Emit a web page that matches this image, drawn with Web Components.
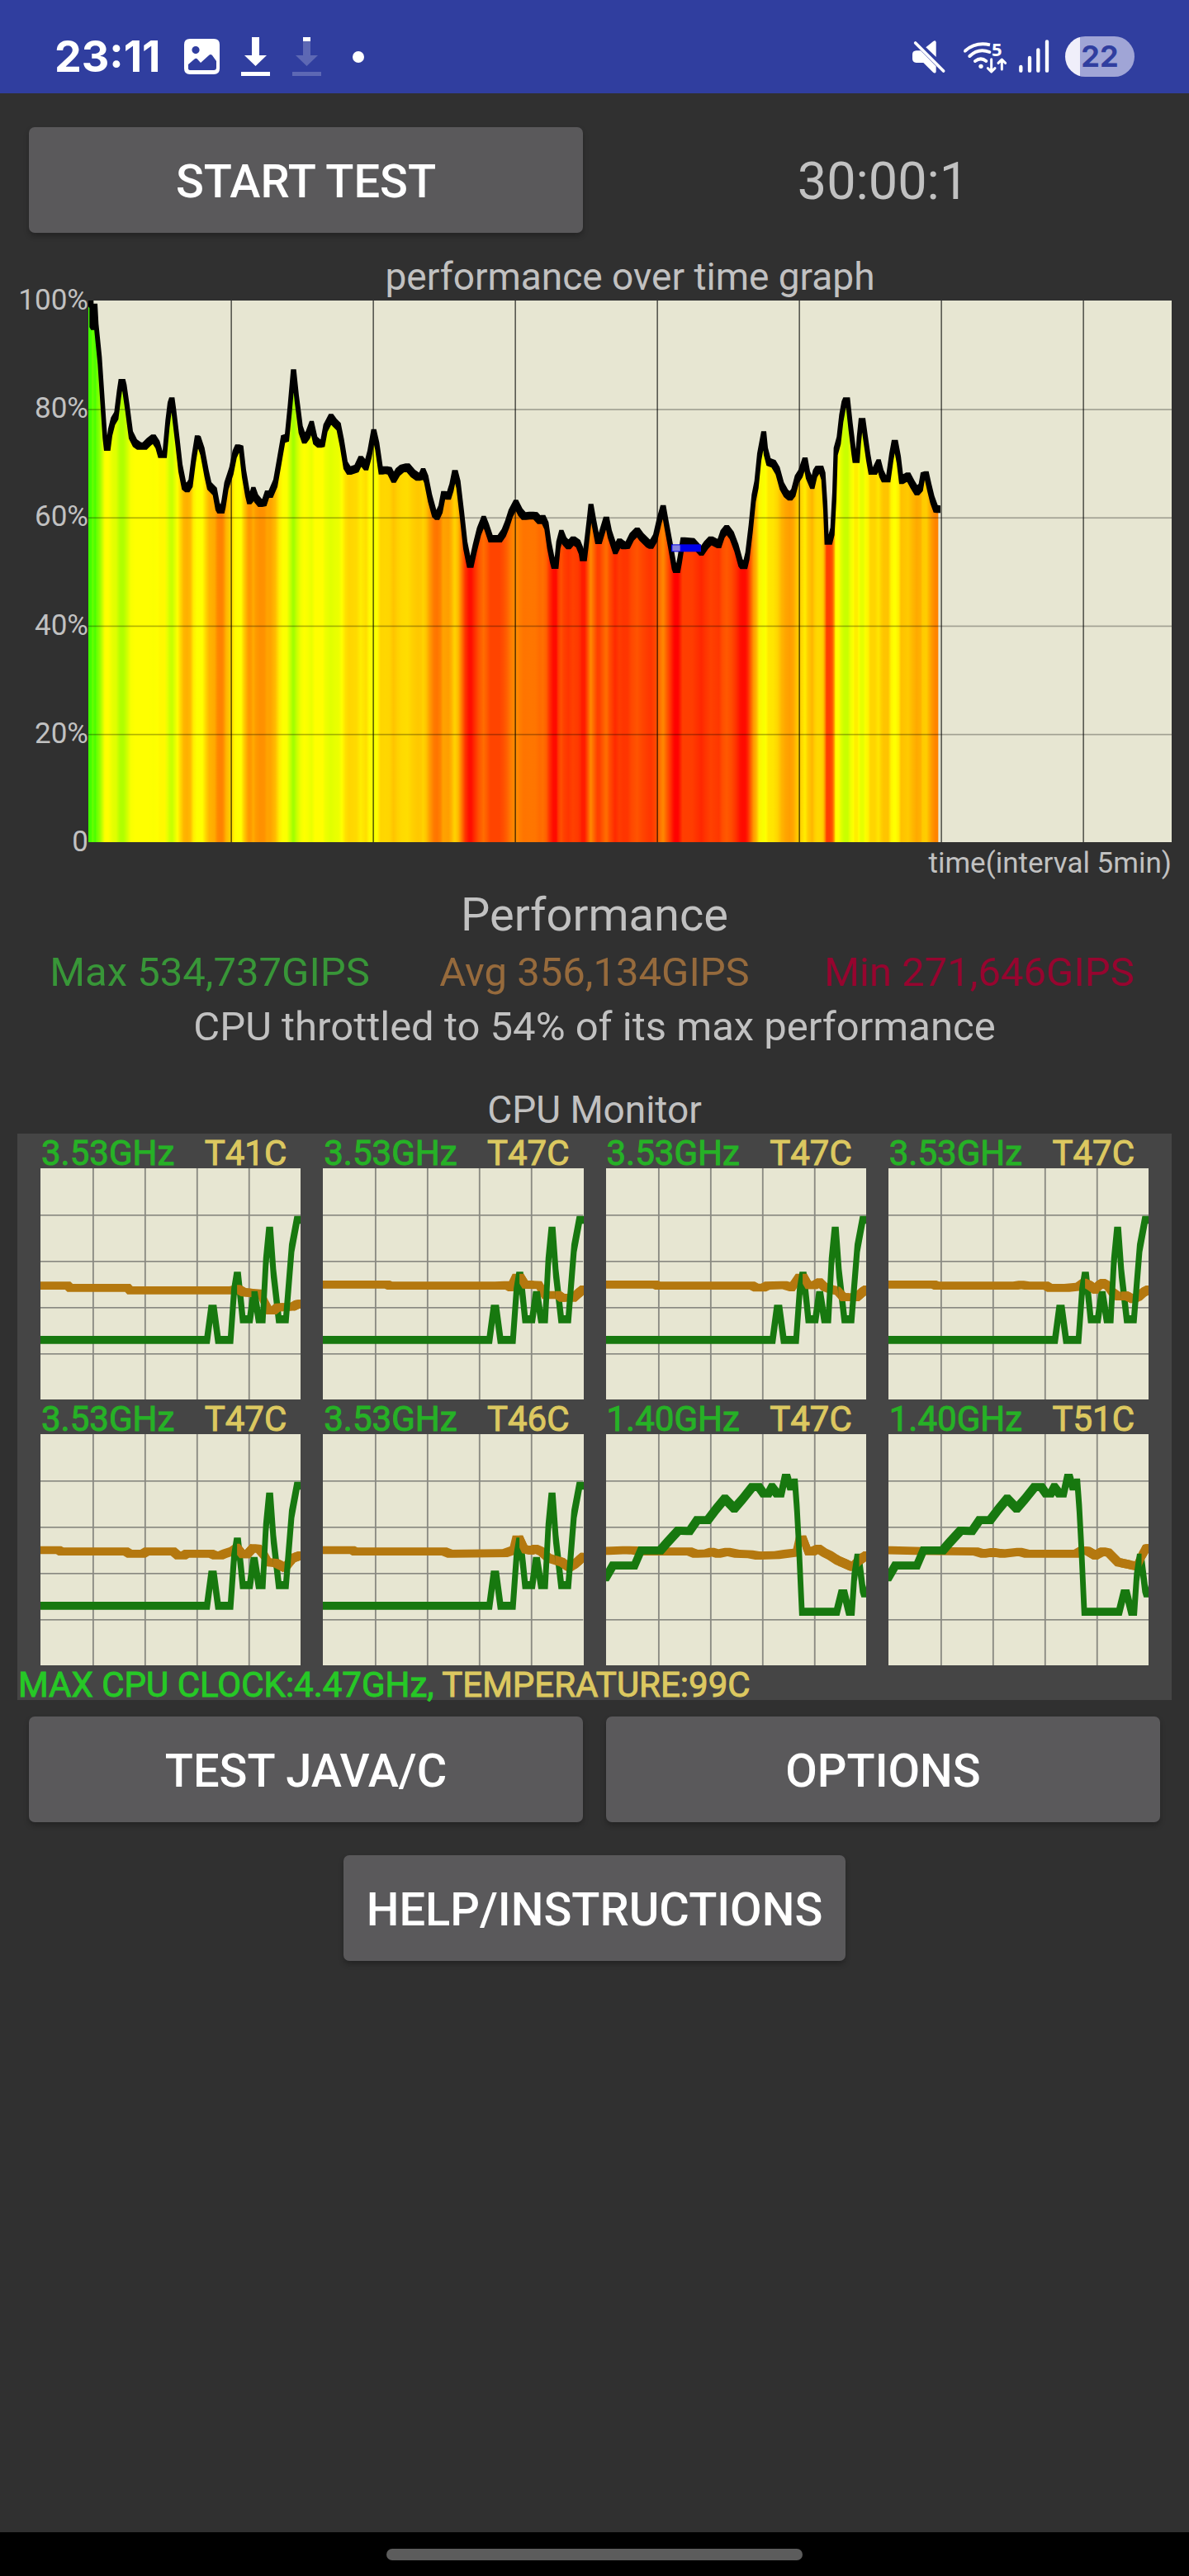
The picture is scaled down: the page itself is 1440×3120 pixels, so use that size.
<!DOCTYPE html>
<html lang="en">
<head>
<meta charset="utf-8">
<meta name="viewport" content="width=device-width, initial-scale=1">
<title>CPU Throttling Test</title>
<style>
  body { margin: 0; background: #303030; color: #c1c1c1; font-family: Roboto, "Liberation Sans", sans-serif; }
</style>
</head>
<body>
<throttle-app></throttle-app>

<script>
const define = (name, html, setup) => {
  const template = document.createElement('template');
  template.innerHTML = html;
  customElements.define(name, class extends HTMLElement {
    connectedCallback() {
      if (this.shadowRoot) return;
      this.attachShadow({ mode: 'open' }).append(template.content.cloneNode(true));
      if (setup) setup(this, this.shadowRoot);
    }
  });
};

/* Sweeps a rectangular nib along the points: one hull per segment, all in one path. */
const sweep = (pts, nibW, nibH) => {
  const w = nibW / 2, h = nibH / 2;
  let d = '';
  for (let i = 1; i < pts.length; i++) {
    const [x1, y1] = pts[i - 1], [x2, y2] = pts[i];
    const hull = y2 >= y1
      ? [[x1 - w, y1 - h], [x1 + w, y1 - h], [x2 + w, y2 - h], [x2 + w, y2 + h], [x2 - w, y2 + h], [x1 - w, y1 + h]]
      : [[x1 - w, y1 - h], [x2 - w, y2 - h], [x2 + w, y2 - h], [x2 + w, y2 + h], [x1 + w, y1 + h], [x1 - w, y1 + h]];
    d += 'M' + hull.map(p => p.map(n => Math.round(n)).join(' ')).join('L') + 'Z';
  }
  return d;
};

/* ---------- status bar ---------- */
define('status-bar', `
<style>
  :host { display: flex; align-items: center; justify-content: space-between; box-sizing: border-box;
    height: 113px; padding: 24px 66px 0 66px; background: #303e9f; color: #fff; }
  div { display: flex; align-items: center; }
  time { font: 700 52px/60px Inter, sans-serif; margin-right: 28px; }
  svg { display: block; flex: none; }
  .left svg { margin-right: 25px; }
  .dot { width: 14px; height: 14px; border-radius: 50%; background: #fff; margin-left: 12px; }
  .mute { margin-right: 20px; }
  .wifi { margin-right: 13px; }
  .signal { margin-right: 18px; }
  .battery { width: 84px; height: 49px; border-radius: 25px; justify-content: center;
    background: linear-gradient(90deg, #f0effa 18px, #a0a5d6 18px); color: #303e9f;
    font: 700 36px/49px Inter, sans-serif; }
</style>
<div class="left">
  <time>23:11</time>
  <svg width="43" height="43" viewBox="0 0 43 43" aria-hidden="true">
    <path fill="#fff" fill-rule="evenodd" d="M7 0H36Q43 0 43 7V36Q43 43 36 43H7Q0 43 0 36V7Q0 0 7 0ZM14 9A4.600 4.600 0 1 0 14 18.200A4.600 4.600 0 1 0 14 9ZM5 31V36Q5 38 8 38H36Q39 38 39 35V27L34 20Q32 18 30 20L20 29L15.500 24Q14 23 12 25Z"/>
  </svg>
  <svg width="37" height="47" viewBox="0 0 37 47" aria-hidden="true">
    <path fill="#fff" d="M14 0H23V22H32L18.500 35L5 22H14ZM1 42H36V47H1Z"/>
  </svg>
  <svg width="37" height="47" viewBox="0 0 37 47" aria-hidden="true">
    <path fill="#fff" fill-opacity=".22" d="M14 0H23V22H32L18.500 35L5 22H14ZM1 42H36V47H1Z"/>
    <path fill="#fff" d="M14 0H23V5H14Z"/>
  </svg>
  <span class="dot"></span>
</div>
<div>
  <svg class="mute" width="42" height="43" viewBox="45 50 126 129" aria-hidden="true">
    <path fill="#fff" d="M62 93H78L134 150V170Q131 179 122 171L88 137H62Q48 136 48 122V107Q48 94 62 93Z"/>
    <path fill="#fff" d="M97 81L124 59Q133 53 134 63V116Z"/>
    <path stroke="#fff" stroke-width="11" stroke-linecap="round" d="M59 65L161 167"/>
  </svg>
  <svg class="wifi" width="54" height="63" viewBox="229 22 162 189" aria-hidden="true">
    <g fill="none" stroke="#fff" stroke-width="12" stroke-linecap="round">
      <path d="M237 96Q276 62 328 74" stroke-linecap="butt"/>
      <path d="M254 115Q286 84 326 100"/>
      <path d="M274 133Q295 117 314 133"/>
      <path stroke-width="9" stroke-linejoin="round" d="M333 126V170M320 159L333 172L346 159M371 163V129M358 140L371 127L384 140"/>
    </g>
    <circle cx="237" cy="97" r="5" fill="#fff"/>
    <circle cx="295" cy="152" r="8" fill="#fff"/>
    <text x="353" y="114" font-size="66" font-weight="700" font-family="Open Sans, sans-serif" text-anchor="middle" fill="#fff">5</text>
  </svg>
  <svg class="signal" width="39" height="43" viewBox="425 52 117 129" aria-hidden="true">
    <path stroke="#fff" stroke-width="13" stroke-linecap="round" d="M435 154V168M467 121V168M498 92V168M530 62V168"/>
  </svg>
  <div class="battery">22</div>
</div>`);

/* ---------- push button ---------- */
define('push-button', `
<style>
  :host { display: block; }
  button { display: block; box-sizing: border-box; width: 100%; height: 128px; padding: 4px 28px 0; border: 0; border-radius: 7px;
    background: #5a595b; color: #fff; font: 500 56px/66px Roboto, sans-serif; white-space: nowrap;
    box-shadow: 0 4px 6px rgba(0,0,0,.25); }
</style>
<button type="button"><slot></slot></button>`);

/* ---------- performance plot ---------- */
/* Samples in thirds of a pixel; every batch has its own origin and time scale. */
const BATCHES = [
  { x0: -321, y0: -72, k: 1, points: '325,75 332,86 332,155 338,165 346,96 350,170 362,290 372,440 380,560 385,604 393,604 400,550 410,510 422,490 432,410 438,370 447,370 452,390 462,460 475,560 490,590 505,600 525,600 540,585 557,572 572,595 582,630 598,630 608,520 616,455 622,437 626,437 632,480 645,590 655,680 668,745 680,755 692,735 703,650 715,575 721,578 735,620 750,700 760,745 780,765 790,820 797,832 807,832 812,810 822,745 840,690 852,630 862,608 876,612 886,700 898,770 905,798 912,790 920,762 930,790 945,808 960,805 970,775 983,775 1000,735 1015,650 1028,575 1042,570 1052,470 1064,335 1068,335 1078,430 1092,540 1105,578 1118,560 1132,522 1145,580 1160,593 1172,590 1182,535 1202,497 1215,515 1230,530 1242,590 1255,670 1268,691 1295,682 1310,650 1330,675 1342,630 1356,552 1359,552 1370,600 1383,690 1400,687 1415,690 1430,720 1445,695' },
  { x0: 1119, y0: -72, k: 1, points: '20,682 40,677 60,700 78,713 90,710 97,694 108,720 122,790 137,845 148,855 160,830 170,777 190,782 200,750 210,701 215,701 225,740 238,850 250,960 264,1029 272,1029 285,970 300,910 317,867 328,895 342,937 375,937 390,915 402,885 415,845 434,809 450,840 463,855 490,852 505,854 520,870 533,864 545,890 555,960 565,1010 571,1033 581,1033 588,960 599,918 610,945 625,962 642,942 660,955 670,980 674,1005 684,1005 692,940 700,870 705,824 708,824 718,880 730,943 738,943 745,920 760,870 765,870 775,920 795,980 810,950 825,962 840,960 855,930 875,910 890,930 915,955 925,960 940,935 955,870 967,828 971,828 982,890 995,960 1008,1035 1013,1048 1023,1048 1030,1010 1040,945 1075,948 1090,965 1108,985 1125,960 1142,942 1172,958 1185,920 1200,901 1218,925 1235,970 1250,1025 1257,1034 1267,1034 1275,1000 1287,900 1298,790 1308,740 1318,640 1333,560 1336,560 1342,620 1352,658 1370,665 1385,690 1400,745 1415,772 1430,785 1442,770 1455,720' },
  { x0: 2319, y0: 108, k: 1.0714, points: '250,520 264,475 267,475 275,525 290,563 300,520 308,506 320,505 328,530 334,640 339,765 350,765 358,730 365,600 370,440 380,400 388,320 397,270 402,257 411,257 420,350 430,440 434,468 443,468 448,400 455,332 463,332 470,390 480,460 488,511 502,511 515,482 525,520 533,539 548,539 558,460 567,411 573,411 583,470 592,545 615,530 630,560 645,586 658,570 665,530 678,525 687,570 697,615 708,648 718,650' }
];
const PLOT = { width: 3936, height: 1968 };

const heat = level => {
  const g = Math.max(0, Math.min(255, (level - 50) * 11.600));
  const r = Math.max(60, Math.min(255, 255 - (level - 74) * 7.400));
  return `rgb(${Math.round(r)},${Math.round(g)},0)`;
};

define('performance-plot', `
<style>
  :host { display: grid; grid-template-columns: 86px minmax(0, 1fr); }
  h2, p { margin: 0; font-weight: 400; grid-column: 2; }
  h2 { font-size: 46px; line-height: 58px; text-align: center; }
  .axis { display: flex; flex-direction: column; justify-content: space-between; text-align: right;
    font-size: 35px; line-height: 42px; margin: -21px 0 -21px -21px; }
  svg { display: block; width: 100%; height: 656px; background: #e7e6d2; }
  p { font-size: 35px; line-height: 42px; text-align: right; margin-top: 5px; }
</style>
<h2>performance over time graph</h2>
<div class="axis"><span>100%</span><span>80%</span><span>60%</span><span>40%</span><span>20%</span><span>0</span></div>
<svg preserveAspectRatio="none" role="img" aria-label="Performance over time"></svg>
<p>time(interval 5min)</p>`, (host, root) => {
  const { width, height } = PLOT;
  const pts = BATCHES.flatMap(b => b.points.split(' ').map(p => {
    const [x, y] = p.split(',').map(Number);
    return [Math.round(x * b.k + b.x0), y + b.y0];
  }));
  const last = pts[pts.length - 1][0];
  const stops = pts.map(([x, y]) =>
    `<stop offset="${(x / last).toFixed(4)}" stop-color="${heat(100 - (y + 4) * 100 / height)}"/>`).join('');
  let grid = '';
  for (let i = 1; i < 8; i++) grid += `<rect x="${i * 516 + 1}" y="0" width="5" height="${height}" fill-opacity=".6"/>`;
  for (let i = 1; i < 5; i++) grid += `<rect x="0" y="${i * height / 5}" width="${width}" height="5" fill-opacity=".3"/>`;
  const svg = root.querySelector('svg');
  svg.setAttribute('viewBox', `0 0 ${width} ${height}`);
  svg.innerHTML = `
    <linearGradient id="heat">${stops}</linearGradient>
    <polygon fill="url(#heat)" points="0,${height} 0,${pts[0][1]} ${pts.map(p => p.join()).join(' ')} ${last},${height}"/>
    <path d="${sweep(pts, 15, 27)}"/>
    <rect x="2118" y="886" width="108" height="27" fill="#0000e8"/>
    <rect x="2122" y="889" width="28" height="21" fill="#8583e0"/>
    ${grid}`;
});

/* ---------- one core ---------- */
const BIG_CLOCK = '0,623 439,623 450,510 457,510 468,623 501,623 510,450 517,390 521,390 528,480 533,548 552,548 561,460 565,460 575,548 586,548 594,340 602,226 606,226 614,380 628,548 647,548 662,290 676,187 686,187';
const PRIME_CLOCK = '0,520 18,477 75,477 92,422 143,422 160,395 190,350 220,352 240,312 268,312 290,272 313,234 338,270 360,235 385,192 403,192 415,215 428,215 437,192 450,215 462,215 471,158 478,158 485,190 498,175 503,270 508,400 516,645 608,645 620,578 628,578 640,645 648,645 654,520 662,448 666,448 676,560 680,578 686,578';
const HEATS = [
  '0,426 72,426 78,434 230,434 236,443 505,443 520,438 535,450 580,455 592,490 602,516 615,516 625,505 645,504 665,502 676,494 686,492',
  '0,422 170,422 176,426 460,426 485,424 495,432 507,397 522,397 533,422 570,424 585,460 620,460 630,470 660,470 672,455 686,440',
  '0,422 130,422 136,426 385,426 395,433 415,433 425,426 470,424 490,432 507,397 522,397 533,424 550,424 563,414 575,430 595,440 610,445 625,468 660,468 675,450 686,440',
  '0,422 120,422 126,426 335,426 350,423 365,426 415,426 425,434 470,434 500,430 515,415 530,425 545,440 555,425 565,416 577,425 590,450 605,465 625,462 645,475 660,465 672,450 686,440',
  '0,421 48,421 54,426 225,426 235,434 270,434 280,426 350,426 362,440 378,440 385,434 450,434 460,440 475,440 485,434 505,425 518,412 532,436 545,436 560,414 575,416 590,440 600,465 620,468 645,485 665,450 686,440',
  '0,421 78,421 84,426 320,426 335,434 480,432 500,422 507,382 520,382 532,418 550,422 560,416 575,425 595,450 630,465 650,484 665,470 686,445',
  '0,424 50,421 75,422 90,426 220,426 235,434 265,433 278,427 295,434 320,427 345,434 380,436 400,441 450,439 475,434 500,430 508,382 520,382 532,425 545,425 560,416 575,430 590,440 610,458 650,482 665,460 686,440',
  '0,421 80,424 230,426 250,434 275,428 300,434 345,427 365,434 495,434 510,422 525,424 545,440 565,426 580,430 605,465 640,475 655,480 668,440 678,416 686,414'
];

define('cpu-core', `
<style>
  :host { display: block; }
  div { display: flex; justify-content: space-between; height: 42px; line-height: 47px; padding: 0 17px 0 1px; font-size: 42px; -webkit-text-stroke: 1px; }
  .clock { color: #26b126; }
  .temp { color: #dcc860; }
  svg { display: block; width: 100%; height: 280px; background: #e7e6d2; }
</style>
<div><span class="clock"></span><span class="temp"></span></div>
<svg viewBox="0 0 686 840" preserveAspectRatio="none" aria-hidden="true"></svg>`, (host, root) => {
  root.querySelector('.clock').textContent = host.getAttribute('clock') + 'GHz';
  root.querySelector('.temp').textContent = 'T' + host.getAttribute('temp') + 'C';
  const index = Number(host.getAttribute('core'));
  const line = (colour, list, extra = '') =>
    `<path fill="${colour}" ${extra} d="${sweep(list.split(' ').map(p => p.split(',').map(Number)), 14, 29)}"/>`;
  let grid = '';
  for (let i = 1; i < 5; i++) grid += `<rect x="${i * 137}" y="0" width="4" height="840"/><rect x="0" y="${i * 168}" width="686" height="5"/>`;
  root.querySelector('svg').innerHTML = `
    <clipPath id="front"><path d="M518 0H556V840H518ZM612 0H640V840H612ZM667 0H686V840H667Z"/></clipPath>
    <g fill="#8a8a82">${grid}</g>
    ${line('#b4780f', HEATS[index])}
    ${line('#17780f', index > 5 ? PRIME_CLOCK : BIG_CLOCK)}
    ${line('#b4780f', HEATS[index], 'clip-path="url(#front)"')}`;
});

/* ---------- CPU monitor panel ---------- */
define('cpu-monitor', `
<style>
  :host { display: block; }
  h2 { margin: 0; font-size: 46px; line-height: 58px; font-weight: 400; text-align: center; }
  .panel { background: #454545; }
  .cores { display: grid; grid-template-columns: repeat(4, minmax(0, 1fr)); column-gap: 27px; padding: 0 28px; }
  p { margin: 0; height: 42px; font-size: 42px; line-height: 47px; padding-left: 1px; color: #26c826; -webkit-text-stroke: 1px; }
  span { color: #dcc860; }
</style>
<h2>CPU Monitor</h2>
<div class="panel">
  <div class="cores">
    <cpu-core core="0" clock="3.53" temp="41"></cpu-core>
    <cpu-core core="1" clock="3.53" temp="47"></cpu-core>
    <cpu-core core="2" clock="3.53" temp="47"></cpu-core>
    <cpu-core core="3" clock="3.53" temp="47"></cpu-core>
    <cpu-core core="4" clock="3.53" temp="47"></cpu-core>
    <cpu-core core="5" clock="3.53" temp="46"></cpu-core>
    <cpu-core core="6" clock="1.40" temp="47"></cpu-core>
    <cpu-core core="7" clock="1.40" temp="51"></cpu-core>
  </div>
  <p>MAX CPU CLOCK:4.47GHz, <span>TEMPERATURE:99C</span></p>
</div>`);

/* ---------- result figures ---------- */
define('performance-summary', `
<style>
  :host { display: block; text-align: center; font-size: 49px; line-height: 58px; }
  h2, p { margin: 0; font-weight: 400; }
  h2 { font-size: 56px; line-height: 66px; }
  div { display: grid; grid-template-columns: repeat(3, minmax(0, 1fr)); margin: 8px 0; }
  .max { color: #389638; } .avg { color: #966a3c; } .min { color: #96052f; }
</style>
<h2>Performance</h2>
<div><span class="max">Max 534,737GIPS</span><span class="avg">Avg 356,134GIPS</span><span class="min">Min 271,646GIPS</span></div>
<p>CPU throttled to 54% of its max performance</p>`);

/* ---------- app ---------- */
define('throttle-app', `
<style>
  :host { display: flex; flex-direction: column; min-height: 100vh; }
  main { padding: 41px 21px 0; }
  .pair { display: grid; grid-template-columns: repeat(2, minmax(0, 1fr)); column-gap: 28px; padding: 0 14px; align-items: center; }
  output { font-size: 63px; line-height: 74px; text-align: center; padding-top: 4px; }
  performance-plot { margin-top: 24px; }
  performance-summary { margin-top: 8px; }
  cpu-monitor { margin: 42px 0 20px; }
  .help { display: flex; justify-content: center; margin-top: 40px; }
  nav { margin-top: auto; height: 53px; background: #000; display: flex; align-items: center; justify-content: center; }
  nav span { width: 35%; height: 14px; border-radius: 7px; background: #5c5c5c; }
</style>
<status-bar></status-bar>
<main>
  <div class="pair"><push-button>START TEST</push-button><output>30:00:1</output></div>
  <performance-plot></performance-plot>
  <performance-summary></performance-summary>
  <cpu-monitor></cpu-monitor>
  <div class="pair"><push-button>TEST JAVA/C</push-button><push-button>OPTIONS</push-button></div>
  <div class="help"><push-button>HELP/INSTRUCTIONS</push-button></div>
</main>
<nav aria-label="Gesture bar"><span></span></nav>`);
</script>
</body>
</html>
